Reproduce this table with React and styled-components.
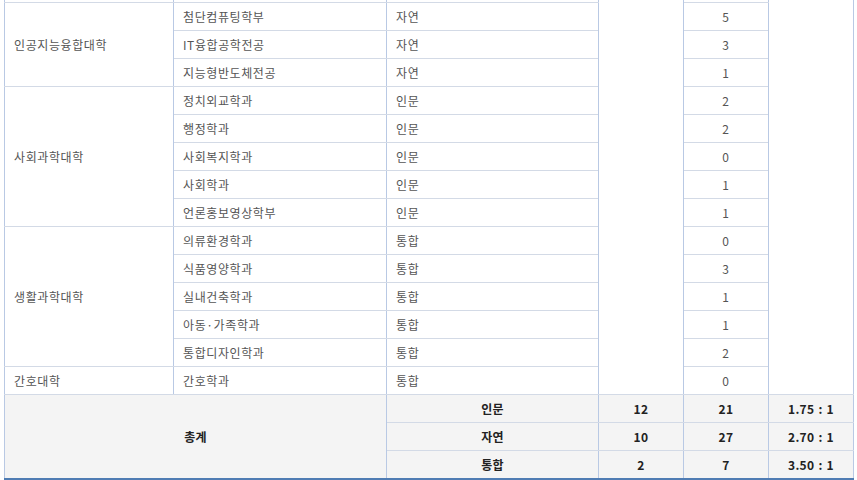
import React from "react";
import styled, { createGlobalStyle } from "styled-components";

const GlobalStyle = createGlobalStyle`
  html, body {
    margin: 0;
    padding: 0;
    background: #fff;
  }
  body {
    font-family: "Noto Sans CJK KR", "Noto Sans", sans-serif;
  }
`;

const Wrap = styled.div`
  height: 480px;
  overflow: hidden;
  padding: 0 4px;
`;

const Table = styled.table`
  width: 849px;
  border-collapse: collapse;
  table-layout: fixed;
  font-size: 12px;
  color: #555;
  border-bottom: 2px solid #4f7cb3;
`;

const Cell = styled.td`
  height: 27px;
  padding: 0 ${(p) => (p.$center ? "0" : "9px")};
  text-align: ${(p) => (p.$center ? "center" : "left")};
  vertical-align: middle;
  border-top: 1px solid #d3dae6;
  border-bottom: 1px solid #d3dae6;
  border-left: 1px solid #b9c9e4;
  border-right: 1px solid #b9c9e4;
  white-space: nowrap;
  line-height: 14px;
  letter-spacing: 0.6px;
`;

const CutCell = styled.td`
  height: 2px;
  padding: 0;
  border-left: 1px solid #b9c9e4;
  border-right: 1px solid #b9c9e4;
  border-bottom: 1px solid #d3dae6;
`;

const SumCell = styled(Cell)`
  background: #f4f4f4;
  text-align: center;
  padding: 0;
  font-weight: bold;
  color: #222;
  letter-spacing: 0.3px;
  word-spacing: 1px;
`;

const colleges = [
  { name: "인공지능융합대학", depts: [["첨단컴퓨팅학부", "자연", 5], ["IT융합공학전공", "자연", 3], ["지능형반도체전공", "자연", 1]] },
  {
    name: "사회과학대학",
    depts: [
      ["정치외교학과", "인문", 2],
      ["행정학과", "인문", 2],
      ["사회복지학과", "인문", 0],
      ["사회학과", "인문", 1],
      ["언론홍보영상학부", "인문", 1],
    ],
  },
  {
    name: "생활과학대학",
    depts: [
      ["의류환경학과", "통합", 0],
      ["식품영양학과", "통합", 3],
      ["실내건축학과", "통합", 1],
      ["아동·가족학과", "통합", 1],
      ["통합디자인학과", "통합", 2],
    ],
  },
  { name: "간호대학", depts: [["간호학과", "통합", 0]] },
];

const totals = [
  ["인문", 12, 21, "1.75 : 1"],
  ["자연", 10, 27, "2.70 : 1"],
  ["통합", 2, 7, "3.50 : 1"],
];

const deptCount = colleges.reduce((n, c) => n + c.depts.length, 0);

const App = () => {
  return (
    <Wrap>
      <GlobalStyle />
      <Table>
        <colgroup>
          <col style={{ width: 169 }} />
          <col style={{ width: 213 }} />
          <col style={{ width: 212 }} />
          <col style={{ width: 85 }} />
          <col style={{ width: 85 }} />
          <col style={{ width: 85 }} />
        </colgroup>
        <tbody>
          {/* tail of the row above, scrolled out of view */}
          <tr>
            <CutCell />
            <CutCell />
            <CutCell />
            <CutCell rowSpan={deptCount + 1} />
            <CutCell />
            <CutCell rowSpan={deptCount + 1} />
          </tr>
          {colleges.map((c) =>
            c.depts.map((d, i) => (
              <tr key={c.name + d[0]}>
                {i === 0 && <Cell rowSpan={c.depts.length}>{c.name}</Cell>}
                <Cell>{d[0]}</Cell>
                <Cell>{d[1]}</Cell>
                <Cell $center>{d[2]}</Cell>
              </tr>
            ))
          )}
          {totals.map((t, i) => (
            <tr key={t[0]}>
              {i === 0 && (
                <SumCell colSpan={2} rowSpan={3}>
                  총계
                </SumCell>
              )}
              <SumCell>{t[0]}</SumCell>
              <SumCell>{t[1]}</SumCell>
              <SumCell>{t[2]}</SumCell>
              <SumCell>{t[3]}</SumCell>
            </tr>
          ))}
        </tbody>
      </Table>
    </Wrap>
  );
};

export default App;
